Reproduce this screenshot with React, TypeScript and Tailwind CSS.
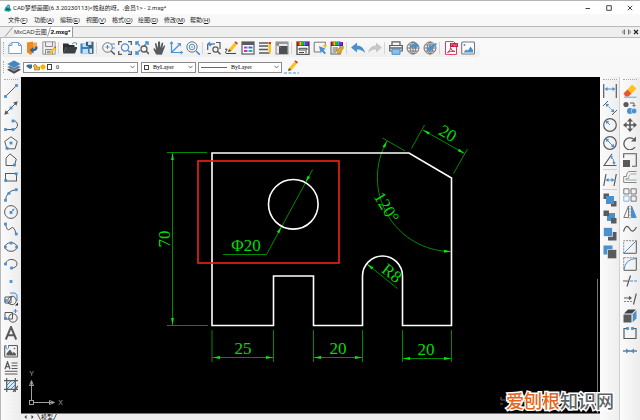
import React from "react";

const K = "#595a5c";
const B = "#4a8fce";

const menus = [
  ["文件", "F"],
  ["功能", "A"],
  ["编辑", "E"],
  ["视图", "V"],
  ["格式", "O"],
  ["绘图", "D"],
  ["修改", "M"],
  ["帮助", "H"],
];

type Tool = { label: string; art: React.ReactNode };

/* Small blue grip point used by most drawing icons */
const Dot = ({ x, y }: { x: number; y: number }) => (
  <rect x={x - 1.4} y={y - 1.4} width="2.8" height="2.8" fill={B} stroke="none" />
);

const Pencil = () => (
  <g stroke="none">
    <path d="M4 11L5 8L10.5 1.5L13 3.5L7.5 10Z" fill="#fbc21b" />
    <path d="M10.5 1.5L11.5 .3L14 2.3L13 3.5Z" fill="#d42c3c" />
    <path d="M4 11L5 8L7.5 10Z" fill="#555" />
  </g>
);

const Globe = () => (
  <g stroke="#777">
    <circle cx="7" cy="7" r="6" />
    <ellipse cx="7" cy="7" rx="2.8" ry="6" />
    <path d="M7 1V13M1 7H13M2 4H12M2 10H12" />
  </g>
);

const Palette = () => (
  <g stroke="none">
    <rect x="1" y="1" width="12" height="4" fill="#222" />
    <rect x="1.5" y="1" width="2" height="3.5" fill="#e22" />
    <rect x="3.5" y="1" width="2" height="3.5" fill="#e8d800" />
    <rect x="5.5" y="1" width="2" height="3.5" fill="#20c030" />
    <rect x="7.5" y="1" width="2" height="3.5" fill="#20b8e8" />
    <rect x="9.5" y="1" width="3" height="3.5" fill="#8a20d8" />
  </g>
);

const topGroups: Tool[][] = [
  [
    { label: "新建", art: <path d="M.8 12.5V4L4 1.5H10.5L13.5 4.5V12.5ZM.8 4.5H4V1.5M10.5 1.5V4.5H13.5" stroke="#6aa3d8" fill="#fff" /> },
    {
      label: "打开",
      art: (
        <g stroke="none">
          <path d="M2 1.5L8 .5V11L6 14L2 11.5Z" fill="#f08a1c" />
          <path d="M8 1.5H12V8H8Z" fill="#f5a94c" />
          <path d="M12.5 5.5Q13 10 8.5 10.2V12.5L4.5 9L8.5 6V8Q10.5 8 10.2 5.5Z" fill="#30659c" />
        </g>
      ),
    },
    {
      label: "另存为",
      art: (
        <>
          <path d="M.8 .8H13.2V13.2H.8Z" fill="#eee" stroke="#999" />
          <path d="M3.5 1V5.5H10.5V1M3.5 13V8.5H10.5V13M5 10.3H9M5 11.7H9" stroke="#888" />
          <path d="M7.5 13L8.3 10.5L12 6L13.8 7.5L10 12Z" fill="#fbc21b" stroke="none" />
          <path d="M12 6L12.7 5.2L14 6.5L13.8 7.5Z" fill="#d33" stroke="none" />
        </>
      ),
    },
  ],
  [
    {
      label: "打开文件夹",
      art: (
        <g stroke="none">
          <path d="M0 12.5V2.5H5L6.5 4H11.5V6H3Z" fill="#2d2f31" />
          <path d="M3 6H14.5L12 12.5H0Z" fill="#3d4042" />
          <path d="M9 3Q11 .5 13.5 2V4" stroke="#4b9a9a" fill="none" />
        </g>
      ),
    },
    {
      label: "保存",
      art: (
        <g stroke="none">
          <path d="M.5 2.5H10V12.5H.5Z" fill="#3a7fbe" />
          <path d="M2.5 2.5H7.5V6H2.5ZM2.5 8H8V12.5H2.5Z" fill="#c8def0" />
          <path d="M6 .8H13.5V12.8H9V5H6Z" fill="#35617f" />
          <path d="M8 .8H11.5V4H8ZM9.5 7.5H12V12H9.5Z" fill="#d7e5f0" />
        </g>
      ),
    },
  ],
  [
    {
      label: "缩放",
      art: (
        <>
          <circle cx="6.5" cy="6.5" r="4.8" stroke="#777" />
          <path d="M10 10L14 13.5" strokeWidth="1.6" />
          <path d="M6.5 4V8M4.5 6H8.5M10 3H14M11 7H14" stroke={B} />
        </>
      ),
    },
    {
      label: "窗口缩放",
      art: (
        <>
          <path d="M.7 4V.7H4M10 .7H13.3V4M13.3 10V13.3H10M4 13.3H.7V10" strokeWidth="1.3" />
          <circle cx="7" cy="6.5" r="3.6" stroke={B} strokeWidth="1.2" />
          <path d="M9.5 9L12 11.5" stroke={B} strokeWidth="1.4" />
        </>
      ),
    },
    {
      label: "范围缩放",
      art: (
        <>
          <path d="M5 5L1 1M1 4V1H4M9 5L13 1M10 1H13V4M5 9L1 13M1 10V13H4" stroke={B} strokeWidth="1.5" />
          <circle cx="9" cy="8" r="3" strokeWidth="1.3" />
          <path d="M11 10L14 13" strokeWidth="1.6" />
        </>
      ),
    },
    {
      label: "平移",
      art: (
        <path
          d="M4.2 13.5L1.5 8.5Q1.3 7 2.7 7.4L4.2 9L3 3Q3 1.8 4.3 2.2L6 7L6 1Q7 -.3 8 1L8.3 6.8L9.8 1.7Q10.8 .9 11.2 2.2L10.4 7.3L12 4.4Q13.2 4 13 5.4L10.8 11.3L9.8 13.7Z"
          fill={K}
          stroke="none"
        />
      ),
    },
    {
      label: "坐标系",
      art: (
        <>
          <path d="M2.5 1V11.5H13.5M2.5 11.5L11 3" stroke={B} strokeWidth="1.2" />
          <path d="M1 3L2.5 .7L4 3M11.5 10L13.7 11.5L11.5 13M8.5 2.8L11.5 2.5L11.3 5.3" stroke={B} />
        </>
      ),
    },
    {
      label: "实时缩放",
      art: (
        <>
          <circle cx="6" cy="6" r="5.2" stroke="#777" />
          <circle cx="6" cy="6" r="2.8" stroke={B} />
          <circle cx="6" cy="6" r=".8" fill={B} stroke="none" />
          <path d="M10 10L14 14" strokeWidth="1.6" stroke={B} />
        </>
      ),
    },
  ],
  [
    {
      label: "上一个视图",
      art: (
        <>
          <path d="M.7 9V3.5H5M9 1.5H13V5M.7 12.5H4M13 8V5" strokeWidth="1.2" />
          <path d="M3 1L1 3L4 5M1 3H8" stroke={B} strokeWidth="1.3" />
          <circle cx="8.5" cy="8.5" r="2.6" strokeWidth="1.2" />
          <path d="M10.5 10.5L13.5 13.3" strokeWidth="1.5" />
        </>
      ),
    },
    {
      label: "绘制",
      art: (
        <>
          <Pencil />
          <path d="M1 8.5Q3.5 7 3 9Q0 12.5 3 12.5H12" stroke="#444" />
        </>
      ),
    },
    {
      label: "特性",
      art: (
        <>
          <rect x="1" y="1" width="12" height="12" fill="#fff" strokeWidth="1.2" />
          <path d="M1 2.5H13" strokeWidth="3" />
          <path d="M3 6.5H6.5M3 10H6.5" stroke="#b33be0" strokeWidth="2" />
          <path d="M7.5 6.5H11.5" stroke="#2c70e8" strokeWidth="2" />
          <path d="M7.5 10H11.5" stroke="#22b5a5" strokeWidth="2" />
        </>
      ),
    },
    {
      label: "线宽",
      art: (
        <>
          <path d="M1 2H10M1 5H10M1 8.5H10M1 12H12" strokeWidth="1.6" />
          <path d="M10.5 2H13V11L11.8 13L10.5 11Z" fill="#fbc21b" stroke="none" />
          <path d="M10.5 1H13V3H10.5Z" fill="#d33" stroke="none" />
        </>
      ),
    },
    {
      label: "背景",
      art: (
        <>
          <rect x="1" y="1" width="12" height="12" fill="#e8e8e8" stroke="#888" />
          <path d="M1 2H13" stroke="#999" strokeWidth="2" />
          <rect x="4" y="5" width="8.5" height="8" fill="#4a5056" stroke="none" />
          <path d="M2 3L6 7M4 3L2 3V5" stroke="#777" />
        </>
      ),
    },
  ],
  [
    {
      label: "图层颜色",
      art: (
        <>
          <rect x="1" y="1" width="12" height="12.5" fill="#fff" strokeWidth="1.4" />
          <Palette />
          <path d="M3 7.3H11V9H3ZM3 11.5H8M10 10V12.5" stroke="#444" />
        </>
      ),
    },
    {
      label: "选择",
      art: (
        <>
          <path d="M7 11H1.2V1.2H12.5V4" stroke="#777" />
          <path d="M6 5L13 8L10.5 9L13 12L11.5 13.3L9 10.5L7.7 12.5Z" fill={B} stroke="none" />
          <path d="M12 2.5V7M9.8 4.8H14" stroke="#f5b921" strokeWidth="1.3" />
        </>
      ),
    },
    {
      label: "格式刷",
      art: (
        <>
          <rect x="1" y="1" width="9" height="12" fill="#fff" />
          <Palette />
          <path d="M2.5 7H8M2.5 9H7M2.5 11H6" />
          <path d="M6 9L10 7L12.5 5L14 6.5L12 9L10.5 13Q7 13 6 9Z" fill="#e0aa22" stroke="#8a6a18" strokeWidth=".5" />
        </>
      ),
    },
  ],
  [
    { label: "撤销", art: <path d="M0 6.5L6 1.5V4.5Q12.5 4.5 14 12Q11 8.3 6 8.5V11.5Z" fill={B} stroke="none" /> },
    { label: "重做", art: <path d="M14 6.5L8 1.5V4.5Q1.5 4.5 0 12Q3 8.3 8 8.5V11.5Z" fill="#c6c6c6" stroke="none" /> },
  ],
  [
    {
      label: "打印",
      art: (
        <>
          <path d="M3 4.5V.8H11V4.5M3 10H.7V4.5H13.3V10H11" strokeWidth="1.2" />
          <path d="M1 7H13" stroke="#888" strokeWidth="2" />
          <path d="M3 8H11V13.3H3Z" fill="#8fbde4" stroke={B} />
        </>
      ),
    },
    {
      label: "发布到网页",
      art: (
        <>
          <Globe />
          <path d="M4 8Q4 3.5 8 3.5V1L13 4.8L8 8V6Q6 5.8 4 8Z" fill={B} stroke="none" />
        </>
      ),
    },
    {
      label: "打开网页图纸",
      art: (
        <>
          <Globe />
          <path d="M13 2L8 5L6 4.5L4.5 10L10 9L9.5 7.5L14 3Z" fill={B} stroke="none" />
        </>
      ),
    },
  ],
  [
    {
      label: "输出PDF",
      art: (
        <>
          <path d="M1.5 .6H9.5L12.5 3.5V13.4H1.5Z" fill="#fff" stroke="#dc3a5c" />
          <rect x="6" y="2" width="8" height="4" fill="#c91c43" stroke="none" />
          <path d="M7.5 5V3H8.5V4M10 3V5H11V3M12.3 5V3H13.5" stroke="#f5a5b8" strokeWidth=".5" />
          <path d="M3.5 11.5Q7 9.5 6.5 6.5Q7.5 10.5 11 10.5Q6.5 9.5 3.5 11.5Z" stroke="#d42c50" />
        </>
      ),
    },
    {
      label: "输出图片",
      art: (
        <>
          <rect x=".7" y="1" width="12.8" height="12" rx="1" fill="#fff" stroke="#777" strokeWidth="1.1" />
          <path d="M2.5 11.5L5 8.5L7 9.5L9.5 5.5L12 9V11.5Z" fill={B} stroke="none" />
          <circle cx="3.5" cy="4" r="1" fill={B} stroke="none" />
        </>
      ),
    },
  ],
];

const drawTools: Tool[] = [
  { label: "直线", art: <><path d="M1.5 12.5L12.5 1.5" /><Dot x={1.5} y={12.5} /><Dot x={12.5} y={1.5} /></> },
  {
    label: "构造线",
    art: (
      <>
        <path d="M2 12L12 2" />
        <path d="M.3 13.7L1.5 9.2L4.8 12.5ZM13.7 .3L12.5 4.8L9.2 1.5Z" fill={K} stroke="none" />
        <Dot x={7} y={7} />
      </>
    ),
  },
  { label: "多段线", art: <><path d="M1.5 11.5H9M9 2.5A4.5 4.5 0 0 1 9 11.5" /><Dot x={1.5} y={11.5} /><Dot x={9} y={11.5} /><Dot x={9} y={3} /></> },
  { label: "正多边形", art: <><path d="M7 .8L13.3 5.4L11 12.8H3L.7 5.4Z" /><Dot x={7} y={7} /><Dot x={3} y={12.3} /></> },
  { label: "多边形", art: <><path d="M2 12.5V5L6 .8L12.3 6L10.5 12.5Z" /><Dot x={10.5} y={12} /></> },
  { label: "矩形", art: <><rect x="1.5" y="3.5" width="11" height="7.5" /><Dot x={12.3} y={3.8} /><Dot x={1.7} y={10.5} /></> },
  { label: "圆弧", art: <><path d="M1.5 12.5Q2 3 12.5 1.5" /><Dot x={1.5} y={12.3} /><Dot x={5} y={5.3} /><Dot x={12.3} y={1.7} /></> },
  {
    label: "圆",
    art: (
      <>
        <circle cx="7" cy="7" r="6.4" />
        <path d="M7 7L10 4" stroke={B} />
        <path d="M10.5 3.5L8 4.2L9.8 6Z" fill={B} stroke="none" />
        <Dot x={7} y={7.5} />
      </>
    ),
  },
  { label: "样条曲线", art: <><path d="M1.5 2Q3 10 6 7Q8.5 4 10 6.5Q11 7.5 12 12" /><Dot x={1.5} y={2} /><Dot x={12.3} y={12} /></> },
  { label: "椭圆", art: <><ellipse cx="7" cy="7" rx="6" ry="4.3" /><Dot x={1.3} y={7} /><Dot x={12.7} y={7} /><Dot x={7} y={3} /></> },
  { label: "椭圆弧", art: <><path d="M1.5 7Q3 2 8 2.5Q13 3 13 7Q12.5 11 7.5 11" /><Dot x={1.5} y={7} /><Dot x={7.5} y={11} /></> },
  { label: "点", art: <Dot x={7} y={7.5} /> },
  {
    label: "插入块",
    art: (
      <>
        <path d="M6 1H11L13 3V9" stroke={B} fill="#d5e7f7" />
        <path d="M1 5H7V11H1Z" />
        <circle cx="8" cy="8.5" r="4.2" />
        <path d="M8 4L4 12" />
        <Dot x={1.5} y={8.5} />
        <path d="M11 13.5H14V10.5Z" fill="#222" stroke="none" />
      </>
    ),
  },
  {
    label: "创建块",
    art: (
      <>
        <path d="M1 3.5H8.5V10H1Z" />
        <circle cx="9" cy="9" r="4.2" />
        <path d="M11.5 0V4M9.5 2H13.5" stroke={B} />
        <Dot x={1.5} y={9.5} />
      </>
    ),
  },
  { label: "单行文字", art: <path d="M1.8 13.5L7 1L12.2 13.5M3.8 9.3H10.2" strokeWidth="2" /> },
  {
    label: "图像",
    art: (
      <>
        <rect x=".7" y="1.5" width="12.8" height="11.5" rx="1" strokeWidth="1.1" />
        <path d="M2.5 11.5V9.5L6 5.5L8.5 9L10 8L12 10V11.5Z" fill={K} stroke="none" />
        <path d="M2 1V4Q3.5 6 4.5 4V1" stroke={B} fill="#fff" />
        <circle cx="10.5" cy="4.5" r=".8" fill={K} stroke="none" />
      </>
    ),
  },
  {
    label: "多行文字",
    art: (
      <>
        <path d="M1 8L3.5 1L6 8M2 5.7H5" strokeWidth="1.3" />
        <path d="M7.5 2H13.5M7.5 4.7H13.5M7.5 7.5H13.5M.8 10.3H13.5M.8 13H13.5" strokeWidth="1.1" />
      </>
    ),
  },
  {
    label: "图案填充",
    art: (
      <>
        <path d="M2.5 2.5H11.5V11.5H2.5Z" fill="#dcebf8" stroke="none" />
        <path d="M3 7L7 3M3 11L11 3M7 11L11 7" stroke={B} />
        <path d="M2.7 0V14M11.3 0V14M0 2.7H14M0 11.3H14M9 14L14 8" strokeWidth="1.2" />
      </>
    ),
  },
];

const dimTools: Tool[] = [
  {
    label: "线性标注",
    art: (
      <>
        <path d="M.7 0V14M13.3 0V14" strokeWidth="1.2" />
        <path d="M3 5H11" stroke={B} />
        <path d="M1.5 5L4.5 3V7ZM12.5 5L9.5 3V7Z" fill={B} stroke="none" />
      </>
    ),
  },
  {
    label: "对齐标注",
    art: (
      <>
        <path d="M0 5L5 0M9 14L14 9" />
        <path d="M4 4L10.5 10.5" stroke={B} strokeDasharray="2 1" />
        <path d="M2.5 2.5L6.3 3.6L3.6 6.3ZM11.5 11.5L7.7 10.4L10.4 7.7Z" fill={B} stroke="none" />
      </>
    ),
  },
  {
    label: "半径标注",
    art: (
      <>
        <circle cx="7" cy="7" r="6.3" strokeWidth="1.2" />
        <path d="M7 7L4 4" stroke={B} />
        <path d="M2.5 2.5L6.3 3.6L3.6 6.3Z" fill={B} stroke="none" />
      </>
    ),
  },
  {
    label: "直径标注",
    art: (
      <>
        <circle cx="7" cy="7" r="6.3" strokeWidth="1.2" />
        <path d="M4 4L10 10" stroke={B} />
        <path d="M2.5 2.5L6.3 3.6L3.6 6.3ZM11.5 11.5L7.7 10.4L10.4 7.7Z" fill={B} stroke="none" />
      </>
    ),
  },
  {
    label: "角度标注",
    art: (
      <>
        <path d="M9 1L1 12.5H13.5" strokeWidth="1.2" />
        <path d="M8 4Q11.5 6 11 11" stroke={B} />
        <path d="M7 3L10 3.5L8.5 6ZM11 12L9.5 9H12.7Z" fill={B} stroke="none" />
      </>
    ),
  },
];

const dimMore: Tool[] = [
  {
    label: "倾斜标注",
    art: (
      <>
        <path d="M.7 13L3 1M11 13L13.3 1" strokeWidth="1.2" />
        <path d="M3.5 7H10.5" stroke={B} />
        <path d="M2.5 7L5.5 5V9ZM11.5 7L8.5 5V9Z" fill={B} stroke="none" />
      </>
    ),
  },
];

const orderTools: Tool[] = [
  { label: "前置", art: <g stroke="none"><path d="M.5 .5H6V6H.5ZM8 8H13.5V13.5H8Z" fill={K} /><path d="M3 3H11V11H3Z" fill={B} /></g> },
  { label: "后置", art: <g stroke="none"><path d="M4 3H12V11H4Z" fill={B} /><path d="M.5 .5H6V6H.5ZM8 8H13.5V13.5H8Z" fill={K} /></g> },
  { label: "置于对象之上", art: <g stroke="none"><path d="M5 5H13.5V13.5H5Z" fill={K} /><path d="M.5 .5H9.5V9.5H.5Z" fill={B} stroke="#fff" strokeWidth=".6" /></g> },
  { label: "置于对象之下", art: <g stroke="none"><path d="M.5 .5H9.5V9.5H.5Z" fill={B} /><path d="M4.5 4.5H13.7V13.7H4.5Z" fill={K} stroke="#fff" strokeWidth=".6" /></g> },
];

const editTools: Tool[] = [
  {
    label: "删除",
    art: (
      <g stroke="none">
        <path d="M4.5 5.5L9 .5L13.5 4.5L8.5 9.5Z" fill="#fcc419" />
        <path d="M.5 9.5L4.5 5.5L8.5 9.5L5.5 12.5H2.5Z" fill="#f0522a" />
        <path d="M1 13.2H13.5" stroke={B} strokeWidth=".8" />
      </g>
    ),
  },
  {
    label: "复制",
    art: (
      <>
        <circle cx="3" cy="3.5" r="2.6" fill={K} stroke="none" />
        <path d="M7 2H11V5M9.5 4L11 5.5L12.5 4" />
        <circle cx="7" cy="10" r="3" fill={B} stroke="none" />
        <circle cx="11" cy="10" r="2.8" fill={B} stroke="#fff" strokeWidth=".5" />
      </>
    ),
  },
  {
    label: "移动",
    art: (
      <>
        <path d="M7 2V12M2 7H12" strokeWidth="1.6" />
        <path d="M7 0L10 3.5H4ZM7 14L10 10.5H4ZM0 7L3.5 4V10ZM14 7L10.5 4V10Z" fill={K} stroke="none" />
      </>
    ),
  },
  {
    label: "旋转",
    art: (
      <>
        <path d="M10.5 3A6 6 0 1 0 12 11" strokeWidth="1.3" />
        <path d="M8 5.5H13V.5Z" fill={K} stroke="none" />
      </>
    ),
  },
  {
    label: "缩放",
    art: (
      <>
        <path d="M.7 5V.7H13.3V13.3H9" strokeWidth="1.1" />
        <rect x="0" y="7" width="7" height="7" fill={K} stroke="none" />
      </>
    ),
  },
  {
    label: "偏移",
    art: (
      <>
        <path d="M.7 12.5V6.5H3.5Q3.5 1.5 7 1.5H13.5M.7 12.5H13.5" stroke="#888" />
        <path d="M3 10V8.5H5.7Q5.7 4 8.5 4H13.5M3 10H13.5" stroke="#9aa" />
      </>
    ),
  },
  {
    label: "阵列",
    art: (
      <>
        <path d="M.8 .8H6V6H.8ZM8 .8H13.2V6H8ZM8 8H13.2V13.2H8Z" stroke="#777" />
        <path d="M.8 8H6V13.2H.8Z" stroke="#86b5df" />
      </>
    ),
  },
  {
    label: "镜像",
    art: (
      <>
        <path d="M5.5 1V12.5H.8Z" stroke="#777" />
        <path d="M8.5 1V12.5H13.2Z" fill={B} stroke={B} />
        <path d="M7 0V14" stroke="#aaa" strokeDasharray="2 1" />
      </>
    ),
  },
  { label: "光顺曲线", art: <path d="M.5 9.5Q3 1 6.5 6.5Q10 12.5 13.5 5" strokeWidth="1.2" /> },
  {
    label: "倒角",
    art: (
      <>
        <path d="M.7 13.3V.7H13.3" stroke="#888" strokeDasharray="2 1" />
        <path d="M.7 13.3H13.3V.7" />
        <path d="M.7 13.3L13.3 .7" stroke={B} />
      </>
    ),
  },
  {
    label: "圆角",
    art: (
      <>
        <path d="M.7 .7H13.3M.7 .7V13" stroke="#888" strokeDasharray="2 1" />
        <path d="M.7 13.3H13.3V.7" />
        <path d="M1 13Q2 2 13 1.5" stroke={B} />
      </>
    ),
  },
  { label: "打断", art: <><path d="M0 7H5M4 12.5L7.5 1.5" strokeWidth="1.2" /><path d="M7 7H14" stroke={B} strokeDasharray="3 1" /></> },
  {
    label: "延伸",
    art: (
      <>
        <path d="M1 6H7M6 4.5L8 6L6 7.5M10.5 12.5L13.3 1.5" strokeWidth="1.2" />
        <path d="M1 9.5H10" stroke={B} strokeDasharray="2 1" />
      </>
    ),
  },
  {
    label: "拉伸",
    art: (
      <g stroke="none">
        <path d="M.5 5.5H8.5V13.5H.5Z" fill={K} />
        <path d="M1 4.5L5 .5H13L9 4.5Z" fill="#404244" />
        <path d="M9.7 5.3L13.5 1.3V9.5L9.7 13.3Z" fill={B} />
      </g>
    ),
  },
  { label: "打断于点", art: <><path d="M4 2.5H1V12.5H13V2.5H10" strokeWidth="1.2" /><Dot x={4.5} y={2.5} /><Dot x={9.5} y={2.5} /></> },
  {
    label: "合并",
    art: (
      <>
        <path d="M0 7H14" strokeWidth="1.2" />
        <path d="M6.5 7L3 4.5V9.5ZM7.5 7L11 4.5V9.5Z" fill={B} stroke="none" />
      </>
    ),
  },
];

const ToolButton = ({ tool }: { tool: Tool }) => (
  <button
    type="button"
    aria-label={tool.label}
    title={tool.label}
    className="flex h-[17px] w-[17px] shrink-0 items-center justify-center hover:bg-sky-100"
  >
    <svg width="14" height="14" viewBox="0 0 14 14" fill="none" stroke={K}>
      {tool.art}
    </svg>
  </button>
);

const ToolColumn = ({ tools }: { tools: Tool[] }) => (
  <div className="flex flex-col items-center [&>*:nth-child(3n)]:mb-px">
    {tools.map((tool) => (
      <ToolButton key={tool.label} tool={tool} />
    ))}
  </div>
);

const Chevron = () => (
  <svg width="5" height="4" viewBox="0 0 5 4" fill="none" stroke="#555" strokeWidth=".8">
    <path d="M.5 .8L2.5 3L4.5 .8" />
  </svg>
);

type PickerProps = { label: string; value: string; className: string; children: React.ReactNode };

const Picker = ({ label, value, className, children }: PickerProps) => (
  <label className={`flex h-[11px] items-center gap-1 border border-[#8c8c8c] bg-white px-0.5 ${className}`}>
    {children}
    <select
      aria-label={label}
      className="min-w-0 flex-1 appearance-none bg-transparent font-['Liberation_Serif',serif] text-[6px] leading-[9px] text-black outline-none"
    >
      <option>{value}</option>
    </select>
    <Chevron />
  </label>
);

const Square = () => <span className="h-[5px] w-[5px] shrink-0 border border-[#444]" />;

/* Arrow head with its tip at x,y; angle is the direction it points to */
const Arrow = ({ x, y, angle }: { x: number; y: number; angle: number }) => (
  <path d="M0 0L-7 -1.4V1.4Z" fill="#00f000" stroke="none" transform={`translate(${x} ${y}) rotate(${angle})`} />
);

const DimText = ({ x, y, angle = 0, children }: { x: number; y: number; angle?: number; children: string }) => (
  <text
    transform={`translate(${x} ${y}) rotate(${angle})`}
    textAnchor="middle"
    dy="6"
    fontSize="17"
    fill="#00dc00"
    stroke="none"
    className="font-['Liberation_Serif',serif]"
  >
    {children}
  </text>
);

const Drawing = () => (
  <svg className="h-full w-full" viewBox="21 77 579 336" preserveAspectRatio="xMinYMin meet" fill="none">
    <g stroke="#008a00">
      <path d="M167 152.5H207M167 325.5H208M172.5 153V325" />
      <path d="M212 330V362M273.5 330V362M313.5 330V362M362.5 330V362M402.5 330V362M451.5 330V362" />
      <path d="M212 357.5H273.5M313.5 357.5H362.5M402.5 358.5H451.5" />
      <path d="M312.7 169.5L266.5 254.5H223" />
      <path d="M411.5 148.5L424.5 125M453.5 173.5L467.5 149M423 130L464.5 153.5" />
      <path d="M382.5 138L405 151M387 141A74 74 0 0 0 451 251.5" />
      <path d="M367 264L397.5 288.5" />
    </g>

    <g stroke="#fff" strokeWidth="1.6">
      <path d="M212 153H409L451.5 178V325.5H402.5V276A20 20 0 0 0 362.5 276V325.5H313.5V276H273.5V325.5H212Z" />
      <circle cx="293.3" cy="204.3" r="24.8" />
    </g>
    <rect x="198" y="161" width="141" height="102" stroke="#e32213" strokeWidth="1.7" />

    <Arrow x={172.5} y={153} angle={-90} />
    <Arrow x={172.5} y={325} angle={90} />
    <Arrow x={213} y={357.5} angle={180} />
    <Arrow x={273} y={357.5} angle={0} />
    <Arrow x={314} y={357.5} angle={180} />
    <Arrow x={362} y={357.5} angle={0} />
    <Arrow x={403} y={358.5} angle={180} />
    <Arrow x={451} y={358.5} angle={0} />
    <Arrow x={305.5} y={182.5} angle={119} />
    <Arrow x={281.5} y={226.5} angle={-61} />
    <Arrow x={423} y={130} angle={209.5} />
    <Arrow x={464.5} y={153.5} angle={29.5} />
    <Arrow x={387} y={141} angle={-63} />
    <Arrow x={451} y={251.5} angle={2} />
    <Arrow x={367} y={264} angle={219} />

    <DimText x={164} y={239} angle={-90}>70</DimText>
    <DimText x={243} y={348}>25</DimText>
    <DimText x={338} y={348}>20</DimText>
    <DimText x={426} y={349}>20</DimText>
    <DimText x={246} y={245}>Φ20</DimText>
    <DimText x={448} y={133} angle={30}>20</DimText>
    <DimText x={387} y={207} angle={58}>120°</DimText>
    <DimText x={392} y={273} angle={38}>R8</DimText>

    {/* Coordinate axes */}
    <g stroke="#a0a0a0">
      <rect x="29.5" y="400.5" width="4" height="4" />
      <path d="M31.5 400V381M34 402.5H54M29.5 385.5L31.5 380.5L33.5 385.5ZM49.5 400.5L54.5 402.5L49.5 404.5Z" />
    </g>
    <g fill="#a0a0a0" fontSize="7" textAnchor="middle" className="font-['Liberation_Sans',sans-serif]">
      <text x="31.5" y="376">Y</text>
      <text x="60.5" y="405">X</text>
    </g>
    <path d="M597.5 279V413" stroke="#777" />
    <path d="M501 397V400H505M500 404H503" stroke="#666" />
  </svg>
);

const App = () => {
  return (
    <div className="relative flex h-screen w-full flex-col overflow-hidden border-t border-[#b5b5b5] bg-[#f8f8f8] font-['Liberation_Sans','Noto_Sans_CJK_SC',sans-serif] text-[6px] leading-[8px] text-[#222]">
      {/* Title bar */}
      <header className="flex h-[13px] shrink-0 items-center bg-white pl-1">
        <svg width="8" height="8" viewBox="0 0 8 8" className="shrink-0">
          <path d="M1 4L4 .3L6 1.5V4L7.7 6L5 7.7L.3 7Z" fill="#1ba399" />
          <path d="M2.2 4.2H5L6 6.2H2Z" fill="#23606a" />
          <path d="M3 2.5L5 2L4.3 3.7Z" fill="#bdeee6" />
        </svg>
        <h1 className="ml-px flex-1 whitespace-nowrap font-['Roboto','Noto_Sans_CJK_SC',sans-serif]">
          CAD梦想画图(6.3.20230113)&lt;姓赵的呀。,会员1&gt; - 2.mxg*
        </h1>
        <div className="flex">
          <button type="button" aria-label="最小化" className="flex h-3 w-[21px] items-center justify-center">
            <svg width="6" height="6" viewBox="0 0 6 6" stroke="#444"><path d="M.5 3.5H5" /></svg>
          </button>
          <button type="button" aria-label="最大化" className="flex h-3 w-[21px] items-center justify-center">
            <svg width="6" height="6" viewBox="0 0 6 6" stroke="#444" fill="none"><path d="M.7 .7H5.3V5.3H.7Z" /></svg>
          </button>
          <button type="button" aria-label="关闭" className="flex h-3 w-[21px] items-center justify-center">
            <svg width="6" height="6" viewBox="0 0 6 6" stroke="#444"><path d="M.8 .8L5.2 5.2M5.2 .8L.8 5.2" /></svg>
          </button>
        </div>
      </header>

      {/* Menu bar */}
      <nav className="flex h-3 shrink-0 items-center gap-2 bg-[#f8f8f8] pl-2">
        {menus.map(([name, key]) => (
          <button key={key} type="button" className="w-[18px] whitespace-nowrap">
            {name}(<u>{key}</u>)
          </button>
        ))}
      </nav>

      {/* Document tabs */}
      <div className="flex h-3 shrink-0 items-stretch border-y border-[#b8b8b8] bg-[#eeeeee] pl-1">
        <svg width="10" height="10" viewBox="0 0 10 10" stroke="#999" fill="none">
          <path d="M1 9.5L8.5 .5" />
        </svg>
        <button type="button" className="whitespace-nowrap bg-[#f6f6f6] text-[#333]">MxCAD云图</button>
        <button type="button" className="flex items-center border-r border-[#999] bg-white pr-0.5 font-bold text-black">
          <svg width="4" height="10" viewBox="0 0 4 10" stroke="#999">
            <path d="M.5 9.5L3.5 .5" />
          </svg>
          2.mxg*
        </button>
        <div className="ml-auto flex items-center gap-px pr-px">
          <button type="button" aria-label="上一个">
            <svg width="5" height="6" viewBox="0 0 5 6" fill="none" stroke="#555" strokeWidth=".8"><path d="M3.5 .8V5.2L1.2 3Z" /></svg>
          </button>
          <button type="button" aria-label="下一个">
            <svg width="5" height="6" viewBox="0 0 5 6" fill="none" stroke="#555" strokeWidth=".8"><path d="M1.5 .8V5.2L3.8 3Z" /></svg>
          </button>
          <button type="button" aria-label="关闭图纸">
            <svg width="6" height="6" viewBox="0 0 6 6" stroke="#222" strokeWidth="1.2"><path d="M1 1L5 5M5 1L1 5" /></svg>
          </button>
        </div>
      </div>

      {/* Main toolbar */}
      <div className="flex h-[19px] shrink-0 items-center border-l border-[#b8b8b8] bg-[#f9f9f9]">
        <div className="flex h-full items-center rounded-sm bg-gradient-to-b from-[#fafafa] to-[#efefef] pl-0.5 pr-1">
          <span className="mr-0.5 h-3 border-l border-dotted border-[#aaa]" />
          {topGroups.map((group, index) => (
            <div key={index} className="flex items-center">
              {index > 0 && <span className="ml-px mr-0.5 h-3 w-px bg-[#d4d4d4]" />}
              {group.map((tool) => (
                <ToolButton key={tool.label} tool={tool} />
              ))}
            </div>
          ))}
        </div>
      </div>

      {/* Layer toolbar */}
      <div className="flex h-5 shrink-0 items-center border-l border-[#b8b8b8] bg-[#f8f8f8] pl-0.5">
        <span className="mr-0.5 h-3 border-l border-dotted border-[#aaa]" />
        <button type="button" aria-label="图层管理器" className="mr-0.5 flex w-[15px] justify-center">
          <svg width="14" height="14" viewBox="0 0 14 14">
            <path d="M0 9.8L7 6L14 9.8L7 13.8Z" fill="#464a50" />
            <path d="M0 7L7 3.5L14 7L7 11Z" fill="#6c7b8c" stroke="#f8f8f8" strokeWidth=".4" />
            <path d="M0 4L7 .2L14 4L7 8Z" fill="#4087c7" stroke="#f8f8f8" strokeWidth=".4" />
          </svg>
        </button>
        <Picker label="图层" value="0" className="w-[115px]">
          <svg width="26" height="8" viewBox="0 0 26 8" className="shrink-0">
            <path d="M0 3L2 1.5H6V5L4 6L1 4Z" fill="#3f6f96" />
            <path d="M7.5 4V2.5Q9 0 10.5 2.5V4H13.5V7H8.5V4" fill="#f2ba3b" stroke="#9b7118" strokeWidth=".7" />
            <circle cx="17" cy="4" r="2.4" fill="#ffb400" />
            <path d="M17 .8V7.2M13.8 4H20.2" stroke="#ffb400" strokeWidth=".6" />
            <rect x="21.5" y="1.5" width="4" height="5" fill="#fff" stroke="#444" />
          </svg>
        </Picker>
        <Picker label="颜色" value="ByLayer" className="ml-[3px] w-[55px]">
          <Square />
        </Picker>
        <Picker label="线型" value="ByLayer" className="ml-0.5 w-[84px]">
          <span className="h-px w-[26px] shrink-0 bg-[#666]" />
        </Picker>
        <button type="button" aria-label="线型编辑" className="ml-0.5">
          <svg width="15" height="14" viewBox="0 0 15 14" fill="none">
            <Pencil />
            <path d="M0 13H15" stroke={B} strokeDasharray="3 1.5" />
          </svg>
        </button>
      </div>

      <div className="flex min-h-0 flex-1">
        {/* Draw tools */}
        <aside className="flex w-[21px] shrink-0 flex-col items-center border-l border-[#b8b8b8] bg-gradient-to-r from-[#fbfbfb] to-[#ececec] pt-0.5">
          <span className="mb-0.5 w-[14px] border-t border-dotted border-[#aaa]" />
          <ToolColumn tools={drawTools} />
        </aside>

        <main className="flex min-w-0 flex-1 flex-col">
          <div className="min-h-0 flex-1 bg-black">
            <Drawing />
          </div>
          <div className="flex h-[7px] shrink-0 items-center overflow-hidden border-t border-[#777] bg-[#eeeeee] pl-0.5">
            <button type="button" aria-label="向左">
              <svg width="5" height="6" viewBox="0 0 5 6" fill="#333"><path d="M3.5 1V5L1.5 3Z" /></svg>
            </button>
            <button type="button" aria-label="向右" className="mx-0.5">
              <svg width="5" height="6" viewBox="0 0 5 6" fill="#333"><path d="M1.5 1V5L3.5 3Z" /></svg>
            </button>
            <svg width="4" height="6" viewBox="0 0 4 6" stroke="#555"><path d="M.5 0L3.5 6" /></svg>
            <button type="button" className="bg-white leading-[6px] text-black">模型</button>
            <svg width="4" height="6" viewBox="0 0 4 6" stroke="#555"><path d="M3.5 0L.5 6" /></svg>
          </div>
        </main>

        {/* Dimension and order tools */}
        <aside className="flex w-5 shrink-0 flex-col items-center border-r border-[#d0d0d0] bg-gradient-to-r from-[#fbfbfb] to-[#eeeeee] pt-0.5">
          <span className="mb-0.5 w-[14px] border-t border-dotted border-[#aaa]" />
          <ToolColumn tools={dimTools} />
          <span className="my-px h-px w-[14px] bg-[#d0d0d0]" />
          <ToolColumn tools={dimMore} />
          <span className="my-px h-px w-[14px] bg-[#d0d0d0]" />
          <ToolColumn tools={orderTools} />
        </aside>

        {/* Modify tools */}
        <aside className="flex w-5 shrink-0 flex-col items-center bg-gradient-to-r from-[#fbfbfb] to-[#ececec] pt-0.5">
          <span className="mb-0.5 w-[14px] border-t border-dotted border-[#aaa]" />
          <ToolColumn tools={editTools} />
        </aside>
      </div>

      {/* Site mark over the lower right corner */}
      <p className="absolute bottom-2 right-[26px] whitespace-nowrap font-['Noto_Sans_CJK_SC',sans-serif] text-[18px] font-medium leading-[24px] text-[#5d6266] [-webkit-text-stroke:3px_white] [paint-order:stroke_fill]">
        <span className="text-[#e8641b]">爱刨根</span>知识网
      </p>
    </div>
  );
};

export default App;
